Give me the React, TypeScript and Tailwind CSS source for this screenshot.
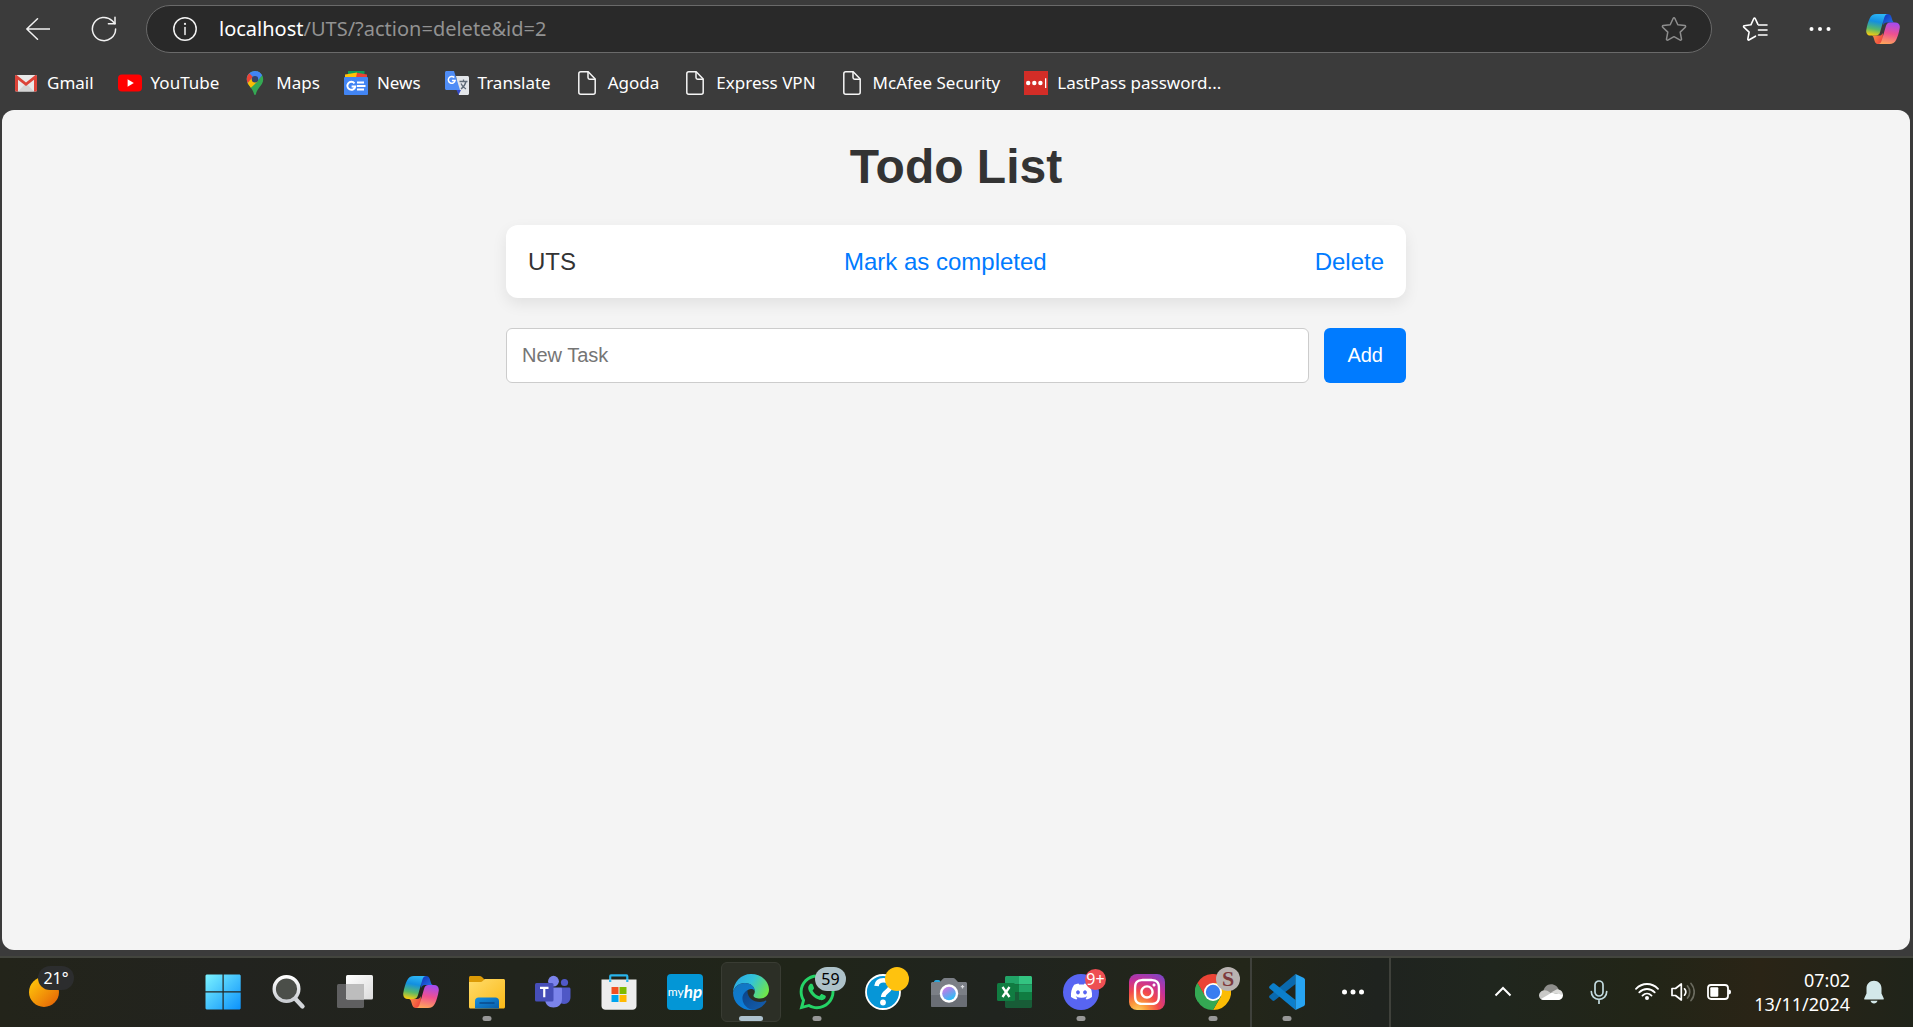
import { useId, useState } from "react";
import type { ReactNode } from "react";
import { FaInstagram, FaWhatsapp, FaDiscord } from "react-icons/fa";

/* ---------- browser toolbar icons ---------- */

const BackIcon = () => (
  <svg width="24" height="24" viewBox="0 0 24 24" fill="none" stroke="#f2f2f2" strokeWidth="1.5" strokeLinecap="round" strokeLinejoin="round">
    <path d="M24 12H.8M11.5 1.8.8 12l10.7 10.2" />
  </svg>
);

const ReloadIcon = () => (
  <svg width="26" height="26" viewBox="0 0 26 26" fill="none" stroke="#f2f2f2" strokeWidth="1.5" strokeLinecap="round" strokeLinejoin="round">
    <path d="M24.6 13a11.6 11.6 0 1 1-3.4-8.2L24 7.6" />
    <path d="M24 1.2v6.6h-6.6" />
  </svg>
);

const InfoIcon = () => (
  <svg width="24" height="24" viewBox="0 0 24 24" fill="none" stroke="#f2f2f2" strokeWidth="1.5" strokeLinecap="round">
    <circle cx="12" cy="12" r="11.2" />
    <path d="M12 10.5v7" />
    <circle cx="12" cy="6.9" r="1.1" fill="#f2f2f2" stroke="none" />
  </svg>
);

const StarIcon = () => (
  <svg width="26" height="26" viewBox="0 0 26 26" fill="none" stroke="#8e8e8e" strokeWidth="1.5" strokeLinejoin="round">
    <path d="M12.2 2.3a.9.9 0 0 1 1.6 0l3 6.4 7 .9c.8.1 1.1 1 .5 1.600l-5.100 4.900 1.300 7c.1.8-.7 1.300-1.300 1L13 20.700l-6.200 3.400c-.7.3-1.400-.2-1.300-1l1.300-7L1.700 11.200c-.6-.6-.3-1.500.5-1.600l7-.9z" />
  </svg>
);

const FavoritesIcon = () => (
  <svg width="26" height="26" viewBox="0 0 26 26" fill="none" stroke="#ffffff" strokeWidth="1.6" strokeLinecap="round" strokeLinejoin="round">
    <path d="M13.500 20.200 6.900 24c-.6.3-1.200-.2-1.100-.8l1.300-7.100L1.800 11.100c-.5-.5-.2-1.300.4-1.400l6.700-.9 2.900-6.300c.3-.6 1.100-.6 1.400 0l2.600 5.700" />
    <path d="M16.500 9H25M16.500 14H25M16.500 19H25" />
  </svg>
);

const DotsIcon = ({ r }: { r: number }) => (
  <svg width="24" height="24" viewBox="0 0 24 24" fill="#ffffff">
    <circle cx="3.500" cy="12" r={r} />
    <circle cx="12" cy="12" r={r} />
    <circle cx="20.500" cy="12" r={r} />
  </svg>
);

const CopilotIcon = ({ size }: { size: number }) => {
  const id = useId();
  return (
    <svg width={size} height={size} viewBox="0 0 36 36">
      <defs>
        <linearGradient id={`${id}a`} x1="0.500" y1="0" x2="0.300" y2="1">
          <stop offset="0" stopColor="#2cb5f5" />
          <stop offset="0.350" stopColor="#138fe0" />
          <stop offset="0.700" stopColor="#57b86a" />
          <stop offset="1" stopColor="#f8cc10" />
        </linearGradient>
        <linearGradient id={`${id}b`} x1="0.600" y1="0" x2="0.400" y2="1">
          <stop offset="0" stopColor="#a44bf0" />
          <stop offset="0.500" stopColor="#ee5090" />
          <stop offset="1" stopColor="#fda35c" />
        </linearGradient>
        <linearGradient id={`${id}c`} x1="0" y1="0" x2="1" y2="1">
          <stop offset="0" stopColor="#1031b8" />
          <stop offset="1" stopColor="#2a7df0" />
        </linearGradient>
        <linearGradient id={`${id}d`} x1="0" y1="0" x2="1" y2="0.500">
          <stop offset="0" stopColor="#fba04a" />
          <stop offset="1" stopColor="#f0483e" />
        </linearGradient>
      </defs>
      <path d="M18 2h5c2 0 3.200 1 3.800 3l1.200 4c.5 1.400 1.300 2 3 2h-9c-2 0-3.200 1.200-3.800 3z" fill={`url(#${id}c)`} />
      <path d="M18 34h-5c-2 0-3.200-1-3.800-3L8 27c-.5-1.400-1.300-2-3-2h9c2 0 3.200-1.200 3.800-3z" fill={`url(#${id}d)`} />
      <path d="M11 2h12.500c-2.300 0-3.500 1.500-4.200 4l-4.300 15c-.7 2.600-2 4-4.500 4H5c-3.400 0-5.300-2.300-4.700-6C1 14.500 2.500 9.500 4 6.500 5.500 3.400 7.800 2 11 2z" fill={`url(#${id}a)`} />
      <path d="M25 34H12.500c2.300 0 3.500-1.500 4.200-4L21 15c.7-2.600 2-4 4.500-4H31c3.400 0 5.300 2.300 4.700 6-.7 4.500-2.200 9.500-3.700 12.500-1.500 3.100-3.800 4.500-7 4.500z" fill={`url(#${id}b)`} />
    </svg>
  );
};

/* ---------- bookmark icons ---------- */

const GmailIcon = () => (
  <svg width="24" height="24" viewBox="0 0 24 24">
    <rect x="1" y="4" width="22" height="16.500" rx="1.500" fill="#e8e8e8" />
    <path d="M4 20.500 12 12l8 8.500z" fill="#d4d4d4" />
    <path d="M1 5.500C1 4.500 1.800 4 2.600 4L12 11.500 21.400 4c.9 0 1.600.6 1.600 1.500V19c0 .9-.6 1.500-1.500 1.500H20V8.700l-8 6.400-8-6.400v11.800H2.500C1.600 20.500 1 19.900 1 19z" fill="#dc4338" />
  </svg>
);

const YouTubeIcon = () => (
  <svg width="24" height="24" viewBox="0 0 24 24">
    <rect y="3.600" width="24" height="16.800" rx="4" fill="#ff0000" />
    <path d="m9.600 8.300 6.200 3.700-6.200 3.700z" fill="#fff" />
  </svg>
);

const MapsIcon = () => {
  const id = useId();
  return (
    <svg width="24" height="24" viewBox="0 0 24 24">
      <clipPath id={id}>
        <path d="M12 0c4.700 0 8.200 3.700 8.200 8.200 0 6.300-6 8.300-7.300 15.100-.2.900-1.600.9-1.800 0C9.800 16.500 3.800 14.500 3.800 8.200 3.800 3.700 7.300 0 12 0z" />
      </clipPath>
      <g clipPath={`url(#${id})`}>
        <path d="M0 0h24v24H0z" fill="#34a853" />
        <path d="M0 18 18.500 0H24v-2H0z" fill="#4285f4" />
        <path d="m14 10.500 7-8.500L16-2 9 6z" fill="#4285f4" />
        <path d="M0 0h4l6 6-7 8H0z" fill="#ea4335" />
        <path d="m3 14 6.500-7.500L15 10l-9.500 9z" fill="#fbbc04" />
      </g>
      <circle cx="12" cy="8.200" r="3.200" fill="#33446a" />
    </svg>
  );
};

const NewsIcon = () => (
  <svg width="24" height="24" viewBox="0 0 24 24">
    <path d="M4 0h16.500v6H4z" fill="#0c9d58" />
    <path d="m1 3.600 12-2v5H1z" fill="#ffc107" />
    <path d="m13 1.800 10 1.800v3H12z" fill="#ea4335" />
    <rect y="6" width="24" height="18" rx="1" fill="#4285f4" />
    <path d="M10.500 12.300a4 4 0 1 0 .8 3.200H7.600" fill="none" stroke="#fff" strokeWidth="1.900" />
    <path d="M13 11.500h7M13 15h8.500M13 18.500h7" stroke="#fff" strokeWidth="1.900" />
  </svg>
);

const TranslateIcon = () => (
  <svg width="24" height="24" viewBox="0 0 24 24">
    <path d="M11 5h11.500c.8 0 1.500.7 1.500 1.500v16c0 .8-.7 1.500-1.500 1.500H14z" fill="#e3e6ea" />
    <path d="M11.500 19H16l-2.500 5z" fill="#3349c8" />
    <path d="M1.500 0H9l6 19H1.500C.7 19 0 18.300 0 17.500v-16C0 .7.700 0 1.500 0z" fill="#4f8df6" />
    <path d="M9.300 6.600a3.400 3.400 0 1 0 .8 2.800H6.900" fill="none" stroke="#fff" strokeWidth="1.500" />
    <path d="M14.500 10.500h8M18.500 8.500v2M21 10.500c-.8 3.500-3 6-5 7.500M16 12.500c1 2.500 3 4.500 5 5.500" fill="none" stroke="#5f6b78" strokeWidth="1.300" />
  </svg>
);

const PageIcon = () => (
  <svg width="24" height="24" viewBox="0 0 24 24" fill="none" stroke="#f5f5f5" strokeWidth="1.500" strokeLinejoin="round">
    <path d="M5.800.8h7.400L20.200 8v13.200c0 1.100-.9 2-2 2H5.800c-1.100 0-2-.9-2-2V2.800c0-1.100.9-2 2-2z" />
    <path d="M13 .8V6.500c0 1 .7 1.700 1.700 1.700h5.500" />
  </svg>
);

const LastPassIcon = () => (
  <svg width="24" height="24" viewBox="0 0 24 24">
    <path d="M0 0h24v24H0z" fill="#d32d27" />
    <g fill="#fff">
      <circle cx="4.200" cy="12" r="2.200" />
      <circle cx="10.300" cy="12" r="2.200" />
      <circle cx="16.400" cy="12" r="2.200" />
      <path d="M21 7.200h1.300v9.800H21z" />
    </g>
  </svg>
);

const bookmarks: { label: string; icon: ReactNode }[] = [
  { label: "Gmail", icon: <GmailIcon /> },
  { label: "YouTube", icon: <YouTubeIcon /> },
  { label: "Maps", icon: <MapsIcon /> },
  { label: "News", icon: <NewsIcon /> },
  { label: "Translate", icon: <TranslateIcon /> },
  { label: "Agoda", icon: <PageIcon /> },
  { label: "Express VPN", icon: <PageIcon /> },
  { label: "McAfee Security", icon: <PageIcon /> },
  { label: "LastPass password...", icon: <LastPassIcon /> },
];

/* ---------- taskbar icons ---------- */

const WindowsIcon = () => (
  <svg width="36" height="36" viewBox="0 0 36 36">
    <defs>
      <linearGradient id="win" gradientUnits="userSpaceOnUse" x1="0" y1="0" x2="36" y2="36">
        <stop offset="0" stopColor="#7df4ff" />
        <stop offset="1" stopColor="#0a90fb" />
      </linearGradient>
    </defs>
    <path d="M1.500.5h16v16.800H.5V1.500zM18.700.5h16l1 1v15.800h-17zM.5 18.500h17v17h-16l-1-1zM18.700 18.500h17v16l-1 1h-16z" fill="url(#win)" />
  </svg>
);

const SearchIcon = () => (
  <svg width="36" height="36" viewBox="0 0 36 36">
    <defs>
      <linearGradient id="srch" x1="0" y1="0" x2="0" y2="1">
        <stop offset="0" stopColor="#ffffff" />
        <stop offset="1" stopColor="#c9ccd1" />
      </linearGradient>
    </defs>
    <path d="m24.500 25 7 7.500" stroke="#d3d6da" strokeWidth="4.400" strokeLinecap="round" />
    <circle cx="15.500" cy="15" r="12.300" fill="#4b4e49" stroke="url(#srch)" strokeWidth="3.400" />
  </svg>
);

const TaskViewIcon = () => (
  <svg width="36" height="36" viewBox="0 0 36 36">
    <defs>
      <linearGradient id="tv" x1="0" y1="0" x2="1" y2="1">
        <stop offset="0" stopColor="#ffffff" />
        <stop offset="1" stopColor="#dcdcdc" />
      </linearGradient>
    </defs>
    <rect x="0" y="10" width="27" height="24" rx="1.500" fill="#5f5f60" />
    <rect x="9" y="1" width="27" height="24.500" rx="1.500" fill="url(#tv)" />
    <path d="M9 10h18v15.500H10.500L9 24z" fill="#bdbdbd" />
  </svg>
);

const ExplorerIcon = () => (
  <svg width="36" height="36" viewBox="0 0 36 36">
    <defs>
      <linearGradient id="fold" x1="0" y1="0" x2="1" y2="1">
        <stop offset="0" stopColor="#ffdc6b" />
        <stop offset="1" stopColor="#fbb917" />
      </linearGradient>
      <linearGradient id="drw" x1="0" y1="0" x2="1" y2="1">
        <stop offset="0" stopColor="#1490df" />
        <stop offset="1" stopColor="#0a5ca8" />
      </linearGradient>
    </defs>
    <path d="M0 3.500C0 2.700.7 2 1.500 2h9c1 0 1.700.4 2.500 1L16 6v4H0z" fill="#dc9a06" />
    <path d="M0 8h11c1.500 0 2.200-.4 3-1.200L15.800 5H34.500c.8 0 1.500.7 1.500 1.500V33c0 .8-.7 1.500-1.500 1.500h-33C.7 34.500 0 33.800 0 33z" fill="url(#fold)" />
    <path d="M6 34.500V27c0-2 1.500-3.500 3.500-3.500h17c2 0 3.500 1.500 3.500 3.500v7.500z" fill="url(#drw)" />
    <path d="M11 29h14" stroke="#0a4a8a" strokeWidth="1.500" strokeLinecap="round" />
  </svg>
);

const TeamsIcon = () => (
  <svg width="36" height="36" viewBox="0 0 36 36">
    <circle cx="29.500" cy="8.500" r="3.600" fill="#5059c9" />
    <path d="M26 13.500h8c.8 0 1.500.7 1.500 1.500v8c0 4-2.500 7-6.500 7s-6-3-6-6z" fill="#4f58c6" />
    <circle cx="18.500" cy="7.200" r="5.400" fill="#7b83eb" />
    <path d="M12 13.500h13.500c.8 0 1.500.7 1.500 1.500v10c0 5-3.500 8.500-8.500 8.500S10 30 10 25V15.500z" fill="#7b83eb" />
    <rect x="0" y="9" width="18.500" height="18.500" rx="1.500" fill="#464eb8" />
    <path d="M5 13.800h8.500M9.250 13.800v9.400" stroke="#fff" strokeWidth="2.200" />
  </svg>
);

const StoreIcon = () => (
  <svg width="36" height="36" viewBox="0 0 36 36">
    <path d="M9.200 8V2.200c0-.5.300-.8.800-.8h15.500c.5 0 .8.300.8.800V8" fill="none" stroke="#28b4ec" strokeWidth="2.200" />
    <path d="M.5 5.500h35V32c0 2.200-1.800 3.800-4 3.800h-27c-2.200 0-4-1.600-4-3.800z" fill="#ededed" />
    <path d="M8.100 5.500v2.400h2.200V5.500zM25.200 5.500v2.400h2.200V5.500z" fill="#28b4ec" />
    <path d="M10.500 13h7v7h-7z" fill="#f25022" />
    <path d="M18.500 13h7v7h-7z" fill="#7fba00" />
    <path d="M10.500 21h7v7h-7z" fill="#00a4ef" />
    <path d="M18.500 21h7v7h-7z" fill="#ffb900" />
  </svg>
);

const MyHpIcon = () => (
  <span className="flex h-9 w-9 items-center justify-center rounded-sm bg-[#0396d6] font-['Lato',sans-serif] text-[12px] leading-none text-white">
    my<span className="text-[17px] leading-none font-bold italic">hp</span>
  </span>
);

const EdgeIcon = () => (
  <svg width="36" height="36" viewBox="0 0 36 36">
    <defs>
      <linearGradient id="edgeTop" x1="0" y1="0.300" x2="1" y2="0.700">
        <stop offset="0" stopColor="#2aa9e6" />
        <stop offset="0.450" stopColor="#33c3d8" />
        <stop offset="1" stopColor="#72e843" />
      </linearGradient>
      <linearGradient id="edgeLeft" x1="0" y1="0" x2="0.500" y2="1">
        <stop offset="0" stopColor="#1476bd" />
        <stop offset="1" stopColor="#0a7ddc" />
      </linearGradient>
      <linearGradient id="edgeDark" x1="0" y1="0" x2="1" y2="1">
        <stop offset="0" stopColor="#0b4387" />
        <stop offset="1" stopColor="#1560b0" />
      </linearGradient>
    </defs>
    <path d="M0 18.500C.5 8 8 0 18 0c11 0 18 8 18 15.500 0 5.500-4 9-9 9-4 0-6.500-1.200-6.500-3 0-1.200 1.300-1.500 1.300-4C21.800 12.500 17 9 12 9 6 9 1.500 12.500 0 18.500z" fill="url(#edgeTop)" />
    <path d="M0 18.500C1.200 12.300 6.500 9 12 9c5.500 0 9.700 3.500 9.800 8-.8-1.500-2-2-3.800-2-4 0-6.500 4-6 8.500.5 6 5.500 11 12 11.500-2 .700-4 1-6 1C8 36 0 28.500 0 18.500z" fill="url(#edgeLeft)" />
    <path d="M14.500 16.200c-3 1.500-5.500 5-5 9.300.6 5.200 5 9.700 10.500 10.300 5.500-.300 10-3.300 13.300-8.300.3-.7-.3-1.100-1-.8-1.500.8-3.400 1.300-5.300 1.300-7.500 0-13-4.500-12.500-11.800z" fill="url(#edgeDark)" />
  </svg>
);

const HelpIcon = () => (
  <svg width="36" height="36" viewBox="0 0 36 36">
    <circle cx="18" cy="18" r="17" fill="#0696d7" stroke="#fff" strokeWidth="1.800" />
    <path d="M11.500 12c.5-4 3.500-5.700 7-5.700 4 0 7 2 7 5.700 0 5.500-7.300 5.500-7.300 11" fill="none" stroke="#fff" strokeWidth="4.600" />
    <circle cx="18" cy="28.500" r="2.900" fill="#fff" />
  </svg>
);

const CameraIcon = () => (
  <svg width="36" height="36" viewBox="0 0 36 36">
    <defs>
      <linearGradient id="cam" x1="0" y1="0" x2="0.600" y2="1">
        <stop offset="0" stopColor="#e07be8" />
        <stop offset="0.400" stopColor="#9a8bea" />
        <stop offset="1" stopColor="#2cc0f5" />
      </linearGradient>
    </defs>
    <path d="M3 8c0-1 .7-2 2-2h2.500c1.200 0 2 1 2 2z" fill="#2aa6dc" />
    <path d="M1.500 8H9l3-3.300c.5-.5 1-.7 1.700-.7h8.600c.7 0 1.200.200 1.700.7L27 8h7.500c.8 0 1.500.7 1.500 1.500v22c0 .8-.7 1.500-1.500 1.500h-33C.7 33 0 32.300 0 31.500v-22C0 8.700.700 8 1.500 8z" fill="#7b7f86" />
    <path d="M0 21h36v10.500c0 .8-.7 1.500-1.500 1.500h-33C.7 33 0 32.300 0 31.500z" fill="#6a6e75" />
    <circle cx="18" cy="19.500" r="9.200" fill="#fff" />
    <circle cx="18" cy="19.500" r="6.800" fill="url(#cam)" />
    <path d="M31.500 11v3.400M29.800 12.700h3.400" stroke="#d8dade" strokeWidth="1.200" />
  </svg>
);

const ExcelIcon = () => (
  <svg width="36" height="36" viewBox="0 0 36 36">
    <path d="M8 3.500C8 2.700 8.700 2 9.500 2H22v8.500H8z" fill="#21a366" />
    <path d="M22 2h11.500c.8 0 1.500.7 1.500 1.500v7H22z" fill="#33c481" />
    <path d="M8 10.500h14V18H8z" fill="#107c41" />
    <path d="M22 10.500h13V18H22z" fill="#21a366" />
    <path d="M8 18h14v8H8z" fill="#185c37" />
    <path d="M22 18h13v8H22z" fill="#107c41" />
    <path d="M8 26h27v6.500c0 .8-.7 1.500-1.500 1.500h-24C8.700 34 8 33.300 8 32.500z" fill="#185c37" />
    <rect x="0" y="9" width="18" height="18" rx="1.500" fill="#107c41" />
    <path d="m5.500 13 7 10M12.500 13l-7 10" stroke="#fff" strokeWidth="2.300" />
  </svg>
);

const DiscordIcon = () => (
  <span className="flex h-9 w-9 items-center justify-center rounded-full bg-[#5865f2] text-white">
    <FaDiscord size={23} />
  </span>
);

const InstagramIcon = () => (
  <span className="flex h-9 w-9 items-center justify-center rounded-lg bg-[radial-gradient(circle_at_25%_105%,#fdd562_0%,#fb9a3c_20%,#f2484c_45%,#c5309a_68%,#6a4bd0_100%)] text-white">
    <FaInstagram size={30} />
  </span>
);

const ChromeIcon = () => (
  <svg width="36" height="36" viewBox="0 0 36 36">
    <path d="M18 18 2.400 9a18 18 0 0 1 31.200 0z" fill="#ea4335" />
    <path d="M18 9h15.600A18 18 0 0 1 18 36l7.800-13.500z" fill="#fbbc04" />
    <path d="M2.400 9A18 18 0 0 0 18 36l7.800-13.500L18 20l-7.800 2.500z" fill="#34a853" />
    <path d="M2.400 9 10.200 22.500 14 9z" fill="#ea4335" />
    <path d="M2.400 9a18 18 0 0 0 .3 18.500L10.200 22.500z" fill="#34a853" />
    <circle cx="18" cy="18" r="9" fill="#fff" />
    <circle cx="18" cy="18" r="7.200" fill="#3a7df0" />
  </svg>
);

const VsCodeIcon = () => (
  <svg width="36" height="36" viewBox="0 0 36 36">
    <path d="M26.500 0v10L5.500 26.500c-.7.500-1.500.5-2 0L.7 24c-.8-.8-.8-1.800 0-2.500z" fill="#0a69ad" />
    <path d="M26.500 36V26L5.500 9.500c-.7-.5-1.500-.5-2 0L.7 12c-.8.8-.8 1.800 0 2.500z" fill="#0c7fcb" />
    <path d="M26.500 0 34.500 3.800c.9.400 1.500 1.300 1.500 2.300v23.800c0 1-.6 1.900-1.500 2.300L26.500 36z" fill="#27a4f2" />
  </svg>
);

const Indicator = () => <span className="absolute bottom-[6px] left-1/2 h-[5px] w-[9px] -translate-x-1/2 rounded-full bg-[#979797]" />;

const TaskItem = ({ label, children, running, active }: { label: string; children: ReactNode; running?: boolean; active?: boolean }) => (
  <button type="button" aria-label={label} className="relative flex h-full w-[66px] shrink-0 items-center justify-center pb-0.5">
    {active && <span className="absolute inset-x-[3px] top-1 bottom-[5px] rounded-md border border-[#393c33] bg-[#2c2f26]" />}
    <span className="relative">{children}</span>
    {running && <Indicator />}
    {active && <span className="absolute bottom-[6px] left-1/2 h-[5px] w-6 -translate-x-1/2 rounded-full bg-[#adc2cf]" />}
  </button>
);

const ChevronIcon = () => (
  <svg width="18" height="24" viewBox="0 0 18 24" fill="none" stroke="#fff" strokeWidth="2">
    <path d="m1.500 15.500 7.500-7.500 7.500 7.500" />
  </svg>
);

const CloudIcon = () => (
  <svg width="24" height="24" viewBox="0 0 24 24">
    <path d="M4 12.500C4.500 7.500 8 4.200 12 4.200c4 0 6.500 2.300 7.700 5.300L12 15z" fill="#8d8d8a" />
    <path d="M4.800 20C2 20 0 18 0 15.500c0-2.800 2.300-5.200 5.500-5.300 2.500 0 4 1 6.500 3l6 6z" fill="#c9c9c7" />
    <path d="m12 12.500 4.500-2.500c1-.600 2-.8 3.200-.5C22.500 10.300 24 12.500 24 15z" fill="#dcdcda" />
    <path d="M2 19 12.500 12.700 23.900 14.500C24.300 18 22 20 19 20H5c-1.200 0-2.200-.3-3-1z" fill="#fff" />
  </svg>
);

const MicIcon = () => (
  <svg width="18" height="24" viewBox="0 0 18 24" fill="none" stroke="#c3dbe0" strokeWidth="1.700" strokeLinecap="round">
    <rect x="5" y="1" width="8" height="15" rx="4" />
    <path d="M1.300 11.500c0 4.500 3.200 7.800 7.700 7.800s7.700-3.300 7.700-7.800M9 19.500V23.500" />
  </svg>
);

const WifiIcon = () => (
  <svg width="24" height="24" viewBox="0 0 24 24" fill="none" stroke="#fff" strokeWidth="1.800" strokeLinecap="round">
    <path d="M1 8.800c6.300-6.400 15.700-6.400 22 0M4.300 12.300c4.400-4.400 11-4.400 15.400 0M7.500 15.600c2.600-2.600 6.400-2.600 9 0" />
    <circle cx="12" cy="18" r="2" fill="#fff" stroke="none" />
  </svg>
);

const VolumeIcon = () => (
  <svg width="24" height="24" viewBox="0 0 24 24" fill="none" stroke="#fff" strokeWidth="1.700" strokeLinecap="round" strokeLinejoin="round">
    <path d="M1 8.500h3.500L10.300 4v16l-5.800-4.500H1z" />
    <path d="M13.500 8.800c1.500 1.800 1.500 4.600 0 6.400" />
    <path d="M16.500 6c3 3.300 3 8.700 0 12M20 3.500c4.300 4.700 4.300 12.300 0 17" stroke="#6a6a5e" />
  </svg>
);

const BatteryIcon = () => (
  <svg width="24" height="24" viewBox="0 0 24 24">
    <rect x="1" y="5" width="20" height="14" rx="3" fill="none" stroke="#fff" strokeWidth="1.800" />
    <rect x="3.300" y="7.300" width="8" height="9.400" rx="1" fill="#fff" />
    <path d="M21.500 9.500c1.500 0 2.500.8 2.500 2.500s-1 2.500-2.500 2.500z" fill="#fff" />
  </svg>
);

const BellIcon = () => (
  <svg width="20" height="24" viewBox="0 0 20 24" fill="#d3e8ea">
    <path d="M10 .8c4.300 0 7.500 3.200 7.500 7.500v5.200l2.200 4.700c.3.700 0 1.300-.7 1.300H1c-.7 0-1-.6-.7-1.300l2.200-4.700V8.300C2.500 4 5.700.8 10 .8zM6.500 20.800h7c-.6 1.700-1.800 2.700-3.500 2.700s-2.900-1-3.500-2.700z" />
  </svg>
);

const Weather = () => (
  <button type="button" aria-label="Weather" className="relative h-full w-[190px] shrink-0">
    <span className="absolute top-[19px] left-[29px] h-[30px] w-[30px] rounded-full bg-linear-to-br from-[#ffcf0a] to-[#e25a06]" />
    <span className="absolute top-2 left-[38px] flex h-6 w-9 items-center justify-center rounded-full bg-[#2c2d2e] text-[16px] text-white">21°</span>
  </button>
);

/* ---------- page sections ---------- */

function BrowserChrome() {
  const [path, setPath] = useState("/UTS/?action=delete&id=2");
  return (
    <header className="text-white">
      <div className="flex items-center pt-[5px] pr-[13px] pl-[26px]">
        <button type="button" aria-label="Back" className="mr-[41px]">
          <BackIcon />
        </button>
        <button type="button" aria-label="Reload" className="mr-[29px]">
          <ReloadIcon />
        </button>
        <div className="flex h-12 min-w-0 flex-1 items-center rounded-full border border-[#6a6a6a] bg-[#292929] pr-[24px] pl-[26px] text-[20px]">
          <InfoIcon />
          <label htmlFor="address" className="ml-[22px]">
            localhost
          </label>
          <input
            id="address"
            value={path}
            onChange={(e) => setPath(e.target.value)}
            className="min-w-0 flex-1 bg-transparent text-[#929292] outline-none"
          />
          <button type="button" aria-label="Add to favorites">
            <StarIcon />
          </button>
        </div>
        <button type="button" aria-label="Favorites" className="ml-[30px]">
          <FavoritesIcon />
        </button>
        <button type="button" aria-label="Settings and more" className="ml-[40px]">
          <DotsIcon r={2} />
        </button>
        <button type="button" aria-label="Copilot" className="ml-[34px]">
          <CopilotIcon size={34} />
        </button>
      </div>
      <nav aria-label="Bookmarks" className="flex h-[57px] items-center gap-6 pt-[3px] pl-[14px] text-[17px] whitespace-nowrap">
        {bookmarks.map((b) => (
          <a key={b.label} href="#" className="flex items-center gap-[9px]">
            {b.icon}
            {b.label}
          </a>
        ))}
      </nav>
    </header>
  );
}

function TodoPage() {
  const [task, setTask] = useState("");
  return (
    <main className="mr-[3px] ml-0.5 flex-1 rounded-xl bg-[#f4f4f4] px-6 pt-[29px] font-['Liberation_Sans',Arial,sans-serif] text-[#333333]">
      <div className="mx-auto max-w-[900px]">
        <h1 className="text-center text-5xl leading-[55px] font-bold">Todo List</h1>
        <ul className="mt-[31px]">
          <li className="flex items-center justify-between rounded-xl bg-white px-[22px] py-[22px] text-2xl leading-[29px] shadow-[0_6px_15px_rgba(0,0,0,0.08)]">
            <span>UTS</span>
            <a href="#" className="text-[#007bff]">
              Mark as completed
            </a>
            <a href="#" className="text-[#007bff]">
              Delete
            </a>
          </li>
        </ul>
        <form className="mt-[30px] flex gap-[15px] text-xl" onSubmit={(e) => e.preventDefault()}>
          <input
            type="text"
            aria-label="New Task"
            placeholder="New Task"
            value={task}
            onChange={(e) => setTask(e.target.value)}
            className="h-[55px] min-w-0 flex-1 rounded-md border border-[#cccccc] bg-white px-[15px] placeholder:text-[#757575]"
          />
          <button type="submit" className="rounded-md bg-[#007bff] px-[23px] pb-0.5 text-white">
            Add
          </button>
        </form>
      </div>
    </main>
  );
}

function Taskbar() {
  return (
    <footer className="mt-1.5 flex h-[71px] border-t-2 border-[#43453e] bg-[linear-gradient(90deg,#23241a_0%,#22231f_12%,#202519_42%,#20241f_52%,#232619_65%,#1f231f_72%,#20261e_78%,#222517_86%,#2a2416_92%,#20241a_100%)] text-white">
      <Weather />
      <TaskItem label="Start"><WindowsIcon /></TaskItem>
      <TaskItem label="Search"><SearchIcon /></TaskItem>
      <TaskItem label="Task view"><TaskViewIcon /></TaskItem>
      <TaskItem label="Copilot"><CopilotIcon size={36} /></TaskItem>
      <TaskItem label="File Explorer" running><ExplorerIcon /></TaskItem>
      <TaskItem label="Teams"><TeamsIcon /></TaskItem>
      <TaskItem label="Store"><StoreIcon /></TaskItem>
      <TaskItem label="myHP"><MyHpIcon /></TaskItem>
      <TaskItem label="Edge" active><EdgeIcon /></TaskItem>
      <TaskItem label="WhatsApp" running>
        <FaWhatsapp size={40} color="#25d366" />
        <span className="absolute -top-[5px] left-[18px] flex h-6 w-[31px] items-center justify-center rounded-full bg-[#adc2c9] text-[16px] text-black">59</span>
      </TaskItem>
      <TaskItem label="HP Support">
        <HelpIcon />
        <span className="absolute -top-[7px] left-5 h-6 w-6 rounded-full bg-[#ffc20e]" />
      </TaskItem>
      <TaskItem label="Camera"><CameraIcon /></TaskItem>
      <TaskItem label="Excel"><ExcelIcon /></TaskItem>
      <TaskItem label="Discord" running>
        <DiscordIcon />
        <span className="absolute -top-[5px] left-[22px] flex h-[21px] w-[21px] items-center justify-center rounded-full bg-[#ee4f53] text-[16px] text-white">9+</span>
      </TaskItem>
      <TaskItem label="Instagram"><InstagramIcon /></TaskItem>
      <TaskItem label="Chrome" running>
        <ChromeIcon />
        <span className="absolute -top-[7px] left-[21px] flex h-6 w-6 items-center justify-center rounded-full bg-[#b9b3b1] font-['Liberation_Serif',serif] text-[22px] font-bold text-[#7d3a3c]">S</span>
      </TaskItem>
      <div className="ml-1 flex border-x-2 border-[#3f413b] pr-[3px] pl-0.5">
        <TaskItem label="Visual Studio Code" running><VsCodeIcon /></TaskItem>
        <TaskItem label="More"><DotsIcon r={2.5} /></TaskItem>
      </div>
      <div className="ml-auto flex items-center pr-[29px] pb-0.5">
        <button type="button" aria-label="Show hidden icons" className="mr-[27px]"><ChevronIcon /></button>
        <button type="button" aria-label="OneDrive" className="mr-[27px]"><CloudIcon /></button>
        <button type="button" aria-label="Microphone" className="mr-[27px]"><MicIcon /></button>
        <button type="button" aria-label="Network, sound and battery" className="mr-[23px] flex gap-3">
          <WifiIcon />
          <VolumeIcon />
          <BatteryIcon />
        </button>
        <time className="mr-3.5 text-right text-[18px] leading-6">
          07:02
          <br />
          13/11/2024
        </time>
        <button type="button" aria-label="Notifications"><BellIcon /></button>
      </div>
    </footer>
  );
}

export default function App() {
  return (
    <div className="flex min-h-screen flex-col bg-[#3b3b3b] font-['Noto_Sans','Open_Sans',sans-serif]">
      <BrowserChrome />
      <TodoPage />
      <Taskbar />
    </div>
  );
}
